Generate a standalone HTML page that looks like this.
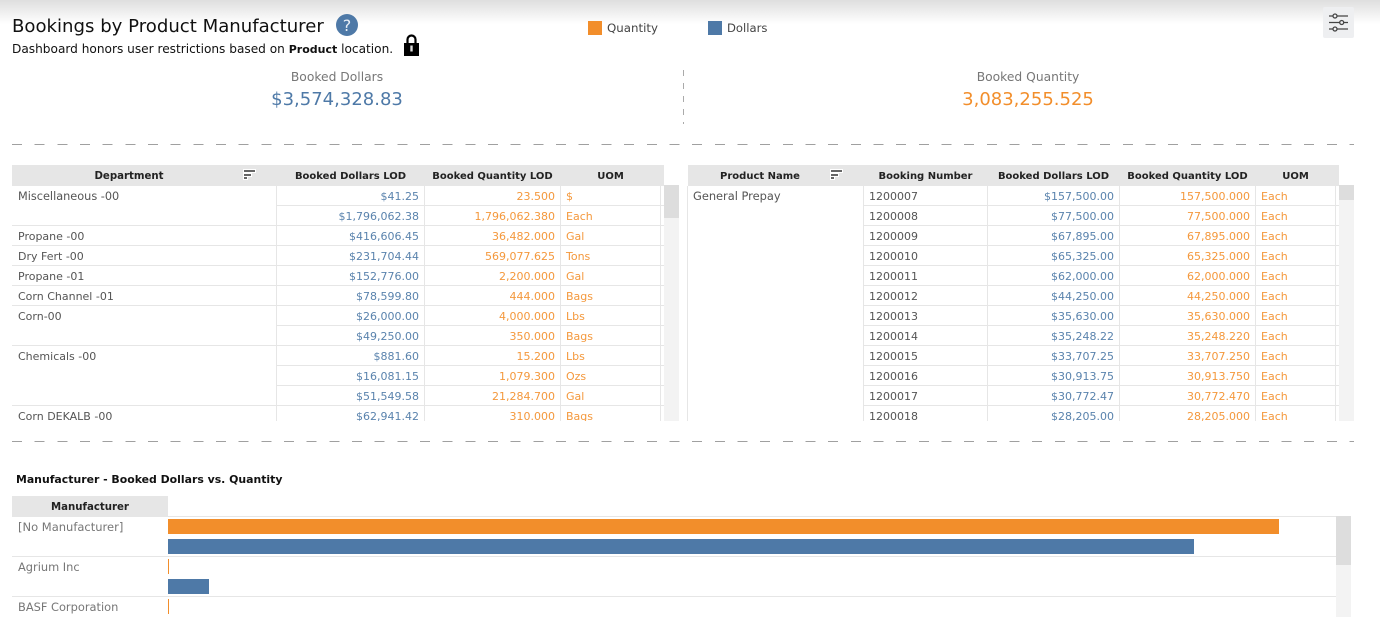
<!DOCTYPE html>
<html><head><meta charset="utf-8"><style>
html,body{margin:0;padding:0;background:#fff}
#p{position:relative;width:1380px;height:622px;overflow:hidden;background:#fff;font-family:"DejaVu Sans","Liberation Sans",sans-serif;font-size:11px;color:#555}
#p div,#p span{position:absolute;white-space:nowrap}
.grad{left:0;top:0;width:1380px;height:24px;background:linear-gradient(#dedede,#fff)}
.hd{top:165px;height:21px;background:#e6e6e6}
.th{top:165px;height:21px;line-height:23px;text-align:center;font-weight:bold;font-size:10px;color:#222}
.sb{background:#f3f3f3}.th2{background:#ddd}
.clip{top:186px;height:235px;overflow:hidden}
.r{left:0;height:20px;line-height:21px}
.l{height:1px;background:#e6e6e6}
.v{width:1px;background:#e6e6e6}
.b{color:#5a83ad;text-align:right}
.o{color:#f4983c;text-align:right}
.u{color:#f4983c}
.t{color:#555}
.dash{height:1px;background:repeating-linear-gradient(90deg,#a0a0a0 0,#a0a0a0 10px,transparent 10px,transparent 22.67px)}
.s{height:2px;background:#666;box-shadow:0 0 0 1px #fff}
</style></head><body><div id="p">
<div class="grad"></div>

<div style="left:12px;top:15px;font-size:18.1px;line-height:24px;color:#111">Bookings by Product Manufacturer</div>
<div style="left:12px;top:41px;font-size:12.15px;line-height:16px;color:#111">Dashboard honors user restrictions based on <b style="font-size:11px">Product</b> location.</div>
<svg style="position:absolute;left:336px;top:14px" width="22" height="22" viewBox="0 0 22 22"><circle cx="11" cy="11" r="11" fill="#4e79a7"/><text x="11" y="17" text-anchor="middle" font-family="DejaVu Sans" font-size="16" fill="#e8eef5">?</text></svg>
<svg style="position:absolute;left:403px;top:34px" width="17" height="23" viewBox="0 0 17 23"><path d="M4.500 10V5.500a4 4 0 0 1 8 0V10" fill="none" stroke="#000" stroke-width="2.200"/><path d="M1 9h15v13H1z" fill="#000"/><rect x="7.300" y="11.500" width="2.400" height="6" fill="#ddd"/></svg>

<div style="left:588px;top:21px;width:14px;height:14px;background:#f28e2b"></div>
<div style="left:607px;top:20px;line-height:16px;font-size:11.8px;color:#444">Quantity</div>
<div style="left:708px;top:21px;width:14px;height:14px;background:#4e79a7"></div>
<div style="left:727px;top:20px;line-height:16px;font-size:11.6px;color:#444">Dollars</div>

<div style="left:1323px;top:7px;width:31px;height:31px;background:#eeeff1;border-radius:2px"></div>
<svg style="position:absolute;left:1323px;top:7px" width="31" height="31" viewBox="0 0 31 31" fill="none" stroke="#444" stroke-width="1.300"><path d="M6 9h19M6 15.500h19M6 22h19"/><circle cx="12" cy="9" r="2" fill="#eeeff1"/><circle cx="18.700" cy="15.500" r="2" fill="#eeeff1"/><circle cx="12" cy="22" r="2" fill="#eeeff1"/></svg>

<div style="left:237px;top:69px;width:200px;text-align:center;font-size:12.3px;line-height:16px;color:#777">Booked Dollars</div>
<div style="left:237px;top:88px;width:200px;text-align:center;font-size:18px;line-height:24px;color:#4e79a7">$3,574,328.83</div>
<div style="left:928px;top:69px;width:200px;text-align:center;font-size:12.3px;line-height:16px;color:#777">Booked Quantity</div>
<div style="left:928px;top:88px;width:200px;text-align:center;font-size:18px;line-height:24px;color:#f28e2b">3,083,255.525</div>
<div style="left:683px;top:70px;width:1px;height:54px;background:repeating-linear-gradient(#aaa 0,#aaa 6px,transparent 6px,transparent 13px)"></div>
<div class="dash" style="left:12px;top:144px;width:1342px"></div>
<div class="dash" style="left:12px;top:441px;width:1342px"></div>

<div class="hd" style="left:12px;width:652px"></div>
<div class="th" style="left:12px;width:234px;font-size:10.2px">Department</div>
<div class="s" style="left:244px;top:170px;width:11px"></div><div class="s" style="left:244px;top:174px;width:7px"></div><div class="s" style="left:244px;top:177px;width:3px"></div>
<div class="th" style="left:277px;width:147px">Booked Dollars LOD</div>
<div class="th" style="left:425px;width:135px">Booked Quantity LOD</div>
<div class="th" style="left:561px;width:99px">UOM</div>
<div class="sb" style="left:664px;top:185px;width:15px;height:236px"></div>
<div class="th2" style="left:664px;top:185px;width:15px;height:33px"></div>

<div class="clip" style="left:12px;width:652px">
<div class="v" style="left:264px;top:0;height:235px"></div><div class="v" style="left:412px;top:0;height:235px"></div><div class="v" style="left:548px;top:0;height:235px"></div><div class="v" style="left:648px;top:0;height:235px"></div>
<div class="l" style="left:264px;top:19px;width:388px"></div>
<div class="l" style="left:0;top:39px;width:652px"></div>
<div class="l" style="left:0;top:59px;width:652px"></div>
<div class="l" style="left:0;top:79px;width:652px"></div>
<div class="l" style="left:0;top:99px;width:652px"></div>
<div class="l" style="left:0;top:119px;width:652px"></div>
<div class="l" style="left:264px;top:139px;width:388px"></div>
<div class="l" style="left:0;top:159px;width:652px"></div>
<div class="l" style="left:264px;top:179px;width:388px"></div>
<div class="l" style="left:264px;top:199px;width:388px"></div>
<div class="l" style="left:0;top:219px;width:652px"></div>
</div>
<div class="clip" style="left:0;width:664px">
<div class="r" style="top:0;width:664px"><span class="t" style="left:18px;font-size:11.3px">Miscellaneous -00</span><span class="b" style="left:277px;width:142px">$41.25</span><span class="o" style="left:425px;width:130px">23.500</span><span class="u" style="left:566px">$</span></div>
<div class="r" style="top:20px;width:664px"><span class="b" style="left:277px;width:142px">$1,796,062.38</span><span class="o" style="left:425px;width:130px">1,796,062.380</span><span class="u" style="left:566px">Each</span></div>
<div class="r" style="top:40px;width:664px"><span class="t" style="left:18px">Propane -00</span><span class="b" style="left:277px;width:142px">$416,606.45</span><span class="o" style="left:425px;width:130px">36,482.000</span><span class="u" style="left:566px">Gal</span></div>
<div class="r" style="top:60px;width:664px"><span class="t" style="left:18px">Dry Fert -00</span><span class="b" style="left:277px;width:142px">$231,704.44</span><span class="o" style="left:425px;width:130px">569,077.625</span><span class="u" style="left:566px">Tons</span></div>
<div class="r" style="top:80px;width:664px"><span class="t" style="left:18px">Propane -01</span><span class="b" style="left:277px;width:142px">$152,776.00</span><span class="o" style="left:425px;width:130px">2,200.000</span><span class="u" style="left:566px">Gal</span></div>
<div class="r" style="top:100px;width:664px"><span class="t" style="left:18px">Corn Channel -01</span><span class="b" style="left:277px;width:142px">$78,599.80</span><span class="o" style="left:425px;width:130px">444.000</span><span class="u" style="left:566px">Bags</span></div>
<div class="r" style="top:120px;width:664px"><span class="t" style="left:18px">Corn-00</span><span class="b" style="left:277px;width:142px">$26,000.00</span><span class="o" style="left:425px;width:130px">4,000.000</span><span class="u" style="left:566px">Lbs</span></div>
<div class="r" style="top:140px;width:664px"><span class="b" style="left:277px;width:142px">$49,250.00</span><span class="o" style="left:425px;width:130px">350.000</span><span class="u" style="left:566px">Bags</span></div>
<div class="r" style="top:160px;width:664px"><span class="t" style="left:18px">Chemicals -00</span><span class="b" style="left:277px;width:142px">$881.60</span><span class="o" style="left:425px;width:130px">15.200</span><span class="u" style="left:566px">Lbs</span></div>
<div class="r" style="top:180px;width:664px"><span class="b" style="left:277px;width:142px">$16,081.15</span><span class="o" style="left:425px;width:130px">1,079.300</span><span class="u" style="left:566px">Ozs</span></div>
<div class="r" style="top:200px;width:664px"><span class="b" style="left:277px;width:142px">$51,549.58</span><span class="o" style="left:425px;width:130px">21,284.700</span><span class="u" style="left:566px">Gal</span></div>
<div class="r" style="top:220px;width:664px"><span class="t" style="left:18px">Corn DEKALB -00</span><span class="b" style="left:277px;width:142px">$62,941.42</span><span class="o" style="left:425px;width:130px">310.000</span><span class="u" style="left:566px">Bags</span></div>
</div>

<div class="hd" style="left:688px;width:651px"></div>
<div class="th" style="left:688px;width:144px">Product Name</div>
<div class="s" style="left:831px;top:170px;width:11px"></div><div class="s" style="left:831px;top:174px;width:7px"></div><div class="s" style="left:831px;top:177px;width:3px"></div>
<div class="th" style="left:864px;width:123px">Booking Number</div>
<div class="th" style="left:988px;width:131px">Booked Dollars LOD</div>
<div class="th" style="left:1120px;width:135px">Booked Quantity LOD</div>
<div class="th" style="left:1256px;width:79px">UOM</div>
<div class="sb" style="left:1339px;top:185px;width:15px;height:236px"></div>
<div class="th2" style="left:1339px;top:185px;width:15px;height:15px"></div>

<div class="clip" style="left:687px;width:652px">
<div class="v" style="left:0;top:0;height:235px"></div><div class="v" style="left:176px;top:0;height:235px"></div><div class="v" style="left:300px;top:0;height:235px"></div><div class="v" style="left:432px;top:0;height:235px"></div><div class="v" style="left:568px;top:0;height:235px"></div><div class="v" style="left:648px;top:0;height:235px"></div>
<div class="l" style="left:176px;top:19px;width:476px"></div><div class="l" style="left:176px;top:39px;width:476px"></div><div class="l" style="left:176px;top:59px;width:476px"></div><div class="l" style="left:176px;top:79px;width:476px"></div><div class="l" style="left:176px;top:99px;width:476px"></div><div class="l" style="left:176px;top:119px;width:476px"></div><div class="l" style="left:176px;top:139px;width:476px"></div><div class="l" style="left:176px;top:159px;width:476px"></div><div class="l" style="left:176px;top:179px;width:476px"></div><div class="l" style="left:176px;top:199px;width:476px"></div><div class="l" style="left:176px;top:219px;width:476px"></div>
<div class="r" style="top:0;width:652px"><span class="t" style="left:6px;font-size:11.4px">General Prepay</span><span class="t" style="left:182px">1200007</span><span class="b" style="left:301px;width:126px">$157,500.00</span><span class="o" style="left:433px;width:130px">157,500.000</span><span class="u" style="left:574px">Each</span></div>
<div class="r" style="top:20px;width:652px"><span class="t" style="left:182px">1200008</span><span class="b" style="left:301px;width:126px">$77,500.00</span><span class="o" style="left:433px;width:130px">77,500.000</span><span class="u" style="left:574px">Each</span></div>
<div class="r" style="top:40px;width:652px"><span class="t" style="left:182px">1200009</span><span class="b" style="left:301px;width:126px">$67,895.00</span><span class="o" style="left:433px;width:130px">67,895.000</span><span class="u" style="left:574px">Each</span></div>
<div class="r" style="top:60px;width:652px"><span class="t" style="left:182px">1200010</span><span class="b" style="left:301px;width:126px">$65,325.00</span><span class="o" style="left:433px;width:130px">65,325.000</span><span class="u" style="left:574px">Each</span></div>
<div class="r" style="top:80px;width:652px"><span class="t" style="left:182px">1200011</span><span class="b" style="left:301px;width:126px">$62,000.00</span><span class="o" style="left:433px;width:130px">62,000.000</span><span class="u" style="left:574px">Each</span></div>
<div class="r" style="top:100px;width:652px"><span class="t" style="left:182px">1200012</span><span class="b" style="left:301px;width:126px">$44,250.00</span><span class="o" style="left:433px;width:130px">44,250.000</span><span class="u" style="left:574px">Each</span></div>
<div class="r" style="top:120px;width:652px"><span class="t" style="left:182px">1200013</span><span class="b" style="left:301px;width:126px">$35,630.00</span><span class="o" style="left:433px;width:130px">35,630.000</span><span class="u" style="left:574px">Each</span></div>
<div class="r" style="top:140px;width:652px"><span class="t" style="left:182px">1200014</span><span class="b" style="left:301px;width:126px">$35,248.22</span><span class="o" style="left:433px;width:130px">35,248.220</span><span class="u" style="left:574px">Each</span></div>
<div class="r" style="top:160px;width:652px"><span class="t" style="left:182px">1200015</span><span class="b" style="left:301px;width:126px">$33,707.25</span><span class="o" style="left:433px;width:130px">33,707.250</span><span class="u" style="left:574px">Each</span></div>
<div class="r" style="top:180px;width:652px"><span class="t" style="left:182px">1200016</span><span class="b" style="left:301px;width:126px">$30,913.75</span><span class="o" style="left:433px;width:130px">30,913.750</span><span class="u" style="left:574px">Each</span></div>
<div class="r" style="top:200px;width:652px"><span class="t" style="left:182px">1200017</span><span class="b" style="left:301px;width:126px">$30,772.47</span><span class="o" style="left:433px;width:130px">30,772.470</span><span class="u" style="left:574px">Each</span></div>
<div class="r" style="top:220px;width:652px"><span class="t" style="left:182px">1200018</span><span class="b" style="left:301px;width:126px">$28,205.00</span><span class="o" style="left:433px;width:130px">28,205.000</span><span class="u" style="left:574px">Each</span></div>
</div>

<div style="left:16px;top:472px;font-size:10.9px;line-height:16px;font-weight:bold;color:#111">Manufacturer - Booked Dollars vs. Quantity</div>
<div class="hd" style="left:12px;top:496px;width:156px"></div>
<div class="th" style="left:12px;top:496px;width:156px;font-size:10.2px">Manufacturer</div>
<div class="l" style="left:12px;top:516px;width:1324px"></div>
<div class="l" style="left:12px;top:556px;width:1324px"></div>
<div class="l" style="left:12px;top:596px;width:1324px"></div>
<div class="t" style="left:18px;top:518px;line-height:18px;font-size:11.5px;color:#777">[No Manufacturer]</div>
<div class="t" style="left:18px;top:558px;line-height:18px;font-size:11.4px;color:#777">Agrium Inc</div>
<div class="t" style="left:18px;top:598px;line-height:18px;font-size:11.4px;color:#777">BASF Corporation</div>
<div style="left:168px;top:519px;width:1111px;height:15px;background:#f28e2b"></div>
<div style="left:168px;top:539px;width:1026px;height:15px;background:#4e79a7"></div>
<div style="left:168px;top:559px;width:1px;height:15px;background:#f28e2b"></div>
<div style="left:168px;top:579px;width:41px;height:15px;background:#4e79a7"></div>
<div style="left:168px;top:599px;width:1px;height:15px;background:#f28e2b"></div>
<div class="sb" style="left:1336px;top:516px;width:15px;height:101px"></div>
<div class="th2" style="left:1336px;top:516px;width:15px;height:49px"></div>
</div></body></html>
